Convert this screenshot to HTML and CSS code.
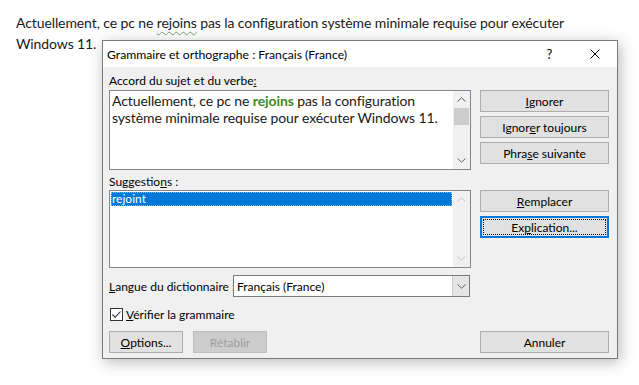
FILE: index.html
```html
<!DOCTYPE html>
<html lang="fr">
<head>
<meta charset="utf-8">
<title>Grammaire et orthographe</title>
<link rel="stylesheet" href="styles.css">
</head>
<body>
<p class="doc">Actuellement, ce pc ne <span class="squiggle">rejoins</span> pas la configuration système minimale requise pour exécuter<br>Windows 11.</p>

<div class="dialog">
  <div class="titlebar">
    <span class="title">Grammaire et orthographe : Français (France)</span>
    <span class="tb-btn help">?</span>
    <span class="tb-btn close">
      <svg width="10" height="10" viewBox="0 0 10 10"><path d="M0.5 0.5 L9.5 9.5 M9.5 0.5 L0.5 9.5" stroke="#000" stroke-width="1" fill="none"/></svg>
    </span>
  </div>
  <div class="body">
    <div class="main">
      <div class="left">
        <div class="label">Accord du sujet et du verbe<u>:</u></div>
        <div class="textbox">
          <div class="tb-text">Actuellement, ce pc ne <b class="err">rejoins</b> pas la configuration<br>système minimale requise pour exécuter Windows 11.</div>
          <div class="vscroll">
            <span class="sb-arrow"><svg width="9" height="5" viewBox="0 0 9 5"><path d="M0.5 4.5 L4.5 0.8 L8.5 4.5" stroke="#606060" fill="none"/></svg></span>
            <span class="sb-track"><span class="sb-thumb"></span></span>
            <span class="sb-arrow"><svg width="9" height="5" viewBox="0 0 9 5"><path d="M0.5 0.5 L4.5 4.2 L8.5 0.5" stroke="#606060" fill="none"/></svg></span>
          </div>
        </div>
        <div class="label label-sugg">Suggestio<u>n</u>s :</div>
        <div class="listbox">
          <div class="lb-items">
            <div class="lb-item selected">rejoint</div>
          </div>
          <div class="vscroll disabled">
            <span class="sb-arrow"><svg width="9" height="5" viewBox="0 0 9 5"><path d="M0.5 4.5 L4.5 0.8 L8.5 4.5" stroke="#c4c4c4" fill="none"/></svg></span>
            <span class="sb-track"></span>
            <span class="sb-arrow"><svg width="9" height="5" viewBox="0 0 9 5"><path d="M0.5 0.5 L4.5 4.2 L8.5 0.5" stroke="#c4c4c4" fill="none"/></svg></span>
          </div>
        </div>
      </div>
      <div class="right">
        <button class="btn"><u>I</u>gnorer</button>
        <button class="btn">Ignor<u>e</u>r toujours</button>
        <button class="btn">Phra<u>s</u>e suivante</button>
        <button class="btn btn-gap"><u>R</u>emplacer</button>
        <button class="btn default"><span class="focus">Ex<u>p</u>lication...</span></button>
      </div>
    </div>
    <div class="lang-row">
      <span class="lang-label"><u>L</u>angue du dictionnaire :</span>
      <div class="combo">
        <span class="combo-text">Français (France)</span>
        <span class="combo-arrow"><svg width="9" height="5" viewBox="0 0 9 5"><path d="M0.5 0.5 L4.5 4.2 L8.5 0.5" stroke="#606060" fill="none"/></svg></span>
      </div>
    </div>
    <div class="check-row">
      <span class="checkbox"><svg width="11" height="11" viewBox="0 0 11 11"><path d="M1.5 5.5 L4.2 8.3 L9.5 2.5" stroke="#222" stroke-width="1.1" fill="none"/></svg></span>
      <span class="check-label"><u>V</u>érifier la grammaire</span>
    </div>
    <div class="bottom-row">
      <button class="btn small"><u>O</u>ptions...</button>
      <button class="btn small disabled-btn">Rétablir</button>
      <button class="btn cancel">Annuler</button>
    </div>
  </div>
</div>
</body>
</html>
```
FILE: styles.css
```css
html, body {
  margin: 0;
  padding: 0;
  background: #ffffff;
  width: 639px;
  height: 385px;
  overflow: hidden;
}

body {
  position: relative;
  font-family: "Lato", sans-serif;
}

.doc {
  margin: 0;
  padding: 12px 0 0 16px;
  font-family: "Lato", "Liberation Sans", sans-serif;
  font-size: 14px;
  letter-spacing: -0.1px;
  line-height: 21px;
  color: #1a1a1a;
}

.squiggle {
  text-decoration: underline wavy #6f9f6a;
  text-decoration-thickness: 1px;
  text-underline-offset: 3px;
}

.dialog {
  position: absolute;
  left: 102px;
  top: 40px;
  width: 516px;
  box-sizing: border-box;
  border: 1px solid #7a7a7a;
  background: #f0f0f0;
  box-shadow: 2px 3px 14px rgba(0, 0, 0, 0.28);
  font-family: "Lato", "Noto Sans", sans-serif;
  font-size: 12px;
  color: #000;
}

.titlebar {
  height: 26px;
  background: #ffffff;
  display: flex;
  align-items: center;
}

.title {
  flex: 1;
  padding-left: 4px;
  font-size: 12.2px;
  white-space: nowrap;
}

.tb-btn {
  width: 45px;
  height: 26px;
  display: flex;
  align-items: center;
  justify-content: center;
}

.help {
  font-size: 13px;
}

.body {
  padding: 6px 8px 5px 6px;
}

.main {
  display: flex;
  gap: 9px;
}

.left {
  width: 362px;
  display: flex;
  flex-direction: column;
}

.label {
  height: 16px;
  line-height: 16px;
  margin-bottom: 1px;
  white-space: nowrap;
}

.label-sugg {
  margin-top: 4px;
  margin-bottom: 0;
}

.textbox {
  height: 80px;
  box-sizing: border-box;
  border: 1px solid #828790;
  background: #fff;
  display: flex;
}

.tb-text {
  flex: 1;
  padding: 1px 0 0 2px;
  font-family: "Lato", "Liberation Sans", sans-serif;
  font-size: 14px;
  letter-spacing: -0.1px;
  line-height: 17px;
  color: #1a1a1a;
  white-space: nowrap;
}

.err {
  color: #3b8a2a;
  font-weight: bold;
}

.vscroll {
  width: 17px;
  background: #f0f0f0;
  display: flex;
  flex-direction: column;
}

.sb-arrow {
  height: 17px;
  display: flex;
  align-items: center;
  justify-content: center;
}

.sb-track {
  flex: 1;
  display: flex;
  flex-direction: column;
  align-items: center;
}

.sb-thumb {
  width: 15px;
  height: 17px;
  background: #cdcdcd;
}

.listbox {
  height: 78px;
  box-sizing: border-box;
  border: 1px solid #828790;
  background: #fff;
  display: flex;
}

.lb-items {
  flex: 1;
  padding: 1px;
}

.lb-item {
  height: 14px;
  line-height: 13px;
  padding-left: 1px;
  box-sizing: border-box;
}

.lb-item.selected {
  background: #0078d7;
  color: #fff;
  outline: 1px dotted #7fb6e8;
  outline-offset: -1px;
}

.right {
  width: 129px;
  padding-top: 17px;
  display: flex;
  flex-direction: column;
  gap: 4px;
}

.btn {
  height: 22px;
  box-sizing: border-box;
  border: 1px solid #adadad;
  background: #e1e1e1;
  font-family: "Lato", "Noto Sans", sans-serif;
  font-size: 12px;
  color: #000;
  padding: 0;
  margin: 0;
  display: flex;
  align-items: center;
  justify-content: center;
  width: 100%;
}

.btn-gap {
  margin-top: 22px;
}

.btn.default {
  border: 2px solid #0078d7;
  padding: 1px;
}

.focus {
  flex: 1;
  align-self: stretch;
  display: flex;
  align-items: center;
  justify-content: center;
  outline: 1px dotted #000;
  outline-offset: -1px;
}

.lang-row {
  margin-top: 7px;
  display: flex;
  align-items: center;
  height: 22px;
}

.lang-label {
  width: 124px;
  white-space: nowrap;
}

.combo {
  width: 237px;
  height: 22px;
  box-sizing: border-box;
  border: 1px solid #7a7a7a;
  background: #fff;
  display: flex;
  align-items: center;
}

.combo-text {
  flex: 1;
  padding-left: 3px;
}

.combo-arrow {
  width: 16px;
  height: 20px;
  background: #e5e5e5;
  border-left: 1px solid #cfcfcf;
  display: flex;
  align-items: center;
  justify-content: center;
}

.check-row {
  margin-top: 11px;
  height: 13px;
  display: flex;
  align-items: center;
  padding-left: 1px;
}

.checkbox {
  width: 13px;
  height: 13px;
  box-sizing: border-box;
  border: 1px solid #333;
  background: #fff;
  display: flex;
  align-items: center;
  justify-content: center;
}

.check-label {
  margin-left: 3px;
}

.bottom-row {
  margin-top: 10px;
  display: flex;
  gap: 10px;
}

.btn.small {
  width: 74px;
}

.btn.disabled-btn {
  background: #cccccc;
  border-color: #bfbfbf;
  color: #a0a0a0;
}

.btn.cancel {
  width: 129px;
  margin-left: auto;
}
```
